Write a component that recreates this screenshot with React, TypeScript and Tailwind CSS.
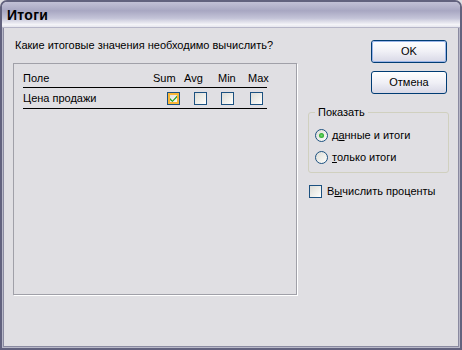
import React from "react";

const font = { fontFamily: '"Liberation Sans", Arial, sans-serif' };

function CheckBox({ checked = false, hot = false }: { checked?: boolean; hot?: boolean }) {
  return (
    <div className="w-[13px] h-[13px] border border-[#1c5180] bg-[linear-gradient(135deg,#dcdcd7_0%,#f4f4f0_70%,#ffffff_100%)] relative shrink-0">
      {hot && <div className="absolute inset-0 border-2 border-[#f8b636]" />}
      {checked && (
        <svg className="absolute left-[1px] top-[1px]" width="9" height="9" viewBox="0 0 9 9">
          <path d="M1 4 L3.5 6.5 L8 1.5 L8 3.5 L3.5 8 L1 6 Z" fill="#21a121" />
        </svg>
      )}
    </div>
  );
}

function Radio({ checked = false }: { checked?: boolean }) {
  return (
    <div className="w-[13px] h-[13px] rounded-full border border-[#1c5180] bg-[linear-gradient(135deg,#dcdcd7_0%,#f4f4f0_70%,#ffffff_100%)] flex items-center justify-center shrink-0">
      {checked && <div className="w-[5px] h-[5px] rounded-full bg-[radial-gradient(circle,#6fdc6f_0%,#21a121_80%)]" />}
    </div>
  );
}

function Button({ children, def = false }: { children: React.ReactNode; def?: boolean }) {
  return (
    <div className="w-[76px] h-[23px] rounded-[3px] border border-[#003c74] bg-[linear-gradient(180deg,#ffffff_0%,#f0f0f6_50%,#d8d8e6_100%)] flex items-center justify-center text-[11px] text-black">
      <div className={"w-full h-full rounded-[2px] flex items-center justify-center " + (def ? "border border-[#9bb5e8]" : "")}>{children}</div>
    </div>
  );
}

export default function App() {
  return (
    <div style={font} className="w-[462px] h-[350px] bg-[#e0dfe3] text-black text-[11px] leading-[13px]">
      <div className="w-[462px] h-[350px] flex flex-col rounded-t-[7px] border-2 border-[#62627e] overflow-hidden">
        <div className="h-[26px] shrink-0 bg-[linear-gradient(180deg,#c2c1d6_0%,#a8a7c2_35%,#c4c4d8_65%,#f4f4f8_90%,#e6e6ee_100%)] flex items-center pl-[5px] border-b border-[#b6b6c8]">
          <span className="text-[14px] font-bold leading-[16px] tracking-[0.3px]">Итоги</span>
        </div>
        <div className="flex-1 flex border-x border-b border-[#b8b8c8]">
          <div className="flex-1 flex border-x border-b border-[#8a8aa0]">
            <div className="w-[284px] ml-[9px] flex flex-col">
              <div className="pt-[11px] pl-[2px] h-[24px]">Какие итоговые значения необходимо вычислить?</div>
              <div className="mt-[11px] h-[232px] border border-[#a0a0a8] shadow-[1px_1px_0_#ffffff] pl-[9px] pr-[29px]">
                <div className="pt-[5px] h-[24px] border-b border-black flex items-center">
                  <span className="flex-1">Поле</span>
                  <span className="w-[29px] pl-[1px]">Sum</span>
                  <span className="w-[28px] pl-[3px]">Avg</span>
                  <span className="w-[32px] pl-[9px]">Min</span>
                  <span className="w-[26px] pl-[7px]">Max</span>
                </div>
                <div className="h-[21px] pt-[1px] border-b border-black flex items-center">
                  <span className="flex-1">Цена продажи</span>
                  <span className="w-[29px] pl-[15px]"><CheckBox checked hot /></span>
                  <span className="w-[28px] pl-[13px]"><CheckBox /></span>
                  <span className="w-[32px] pl-[12px]"><CheckBox /></span>
                  <span className="w-[26px] pl-[9px]"><CheckBox /></span>
                </div>
              </div>
            </div>
            <div className="ml-[11px] w-[141px] flex flex-col">
              <div className="pt-[12px] flex flex-col items-end pr-[2px] gap-[8px]">
                <Button def>OK</Button>
                <Button>Отмена</Button>
              </div>
              <div className="mt-[18px] h-[61px] rounded-[3px] border border-[#d0d0bf] relative flex flex-col pl-[6px]">
                <span className="absolute left-[6px] top-[-7px] px-[3px] bg-[#e0dfe3]">Показать</span>
                <div className="mt-[16px] flex items-center gap-[4px]">
                  <Radio checked />
                  <span>д<u>а</u>нные и итоги</span>
                </div>
                <div className="mt-[9px] flex items-center gap-[4px]">
                  <Radio />
                  <span><u>т</u>олько итоги</span>
                </div>
              </div>
              <div className="mt-[12px] flex items-center gap-[5px] pl-[1px]">
                <CheckBox />
                <span>В<u>ы</u>числить проценты</span>
              </div>
            </div>
          </div>
        </div>
      </div>
    </div>
  );
}
